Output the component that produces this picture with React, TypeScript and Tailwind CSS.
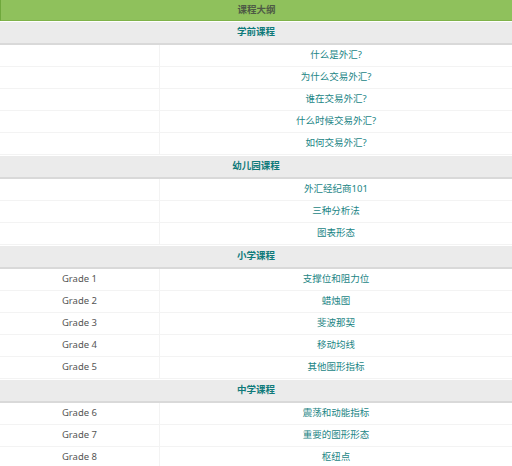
const sections = [
  {
    title: "学前课程",
    rows: [
      ["", "什么是外汇?"],
      ["", "为什么交易外汇?"],
      ["", "谁在交易外汇?"],
      ["", "什么时候交易外汇?"],
      ["", "如何交易外汇?"],
    ],
  },
  {
    title: "幼儿园课程",
    rows: [
      ["", "外汇经纪商101"],
      ["", "三种分析法"],
      ["", "图表形态"],
    ],
  },
  {
    title: "小学课程",
    rows: [
      ["Grade 1", "支撑位和阻力位"],
      ["Grade 2", "蜡烛图"],
      ["Grade 3", "斐波那契"],
      ["Grade 4", "移动均线"],
      ["Grade 5", "其他图形指标"],
    ],
  },
  {
    title: "中学课程",
    rows: [
      ["Grade 6", "震荡和动能指标"],
      ["Grade 7", "重要的图形形态"],
      ["Grade 8", "枢纽点"],
    ],
  },
];

const App = () => {
  return (
    <div className="h-[466px] w-[512px] overflow-hidden bg-white font-['Noto_Sans','Noto_Sans_CJK_SC',sans-serif] text-[9.5px]">
      <div className="flex h-[21px] items-center justify-center border-b border-l border-[#6fa83c] border-b-[#7fb24a] bg-[#8fc15c] font-bold text-[#4e5a45]">
        课程大纲
      </div>
      {sections.map((section) => (
        <div key={section.title}>
          <div className="flex h-[24px] items-center justify-center border-b-2 border-[#d9d9d9] border-t border-t-white bg-[#ebebeb] font-bold text-[#0f7a7a]">
            {section.title}
          </div>
          {section.rows.map(([grade, lesson]) => (
            <div className="grid h-[22px] grid-cols-[160px_1fr] border-b border-[#f3f3f3]" key={lesson}>
              <div className="flex items-center justify-center border-r border-[#f3f3f3] text-[#555555]">{grade}</div>
              <div className="flex items-center justify-center text-[#1b8585]">{lesson}</div>
            </div>
          ))}
        </div>
      ))}
    </div>
  );
};

export default App;
